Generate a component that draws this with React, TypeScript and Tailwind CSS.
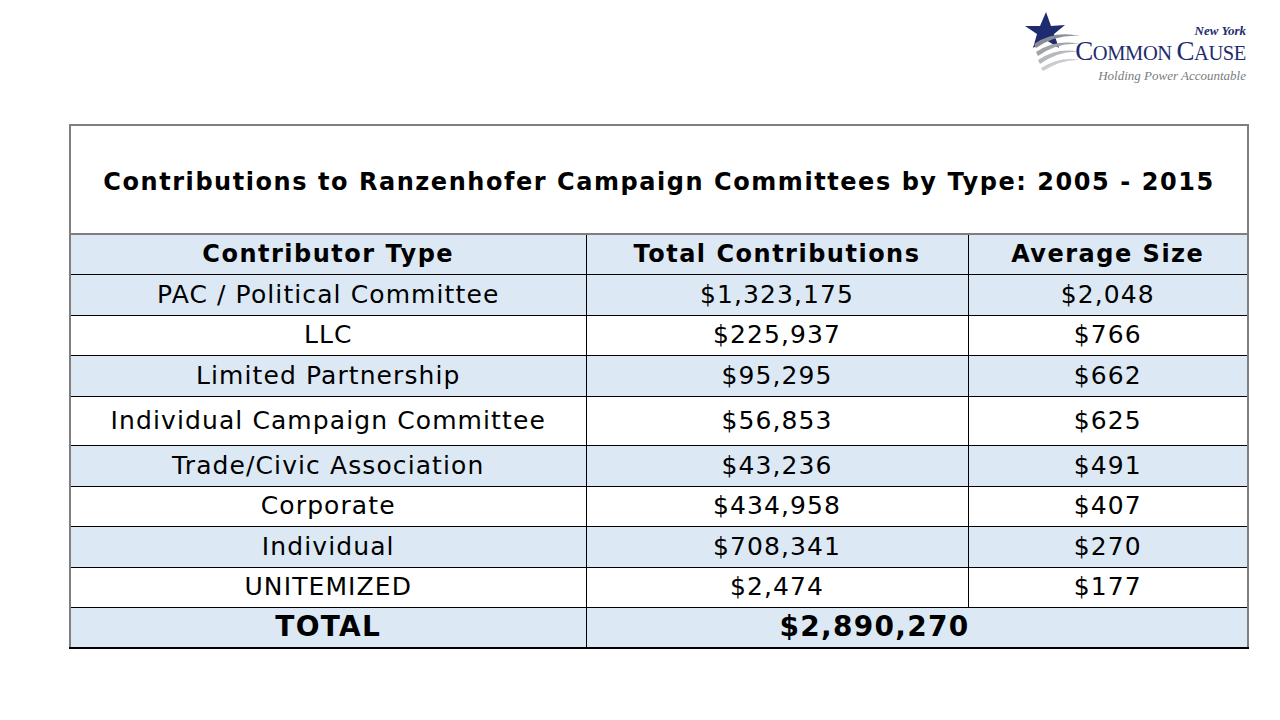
import React from "react"

type Row = { type: string; total: string; avg: string; h: string; shaded: boolean }

const rows: Row[] = [
    { type: "PAC / Political Committee", total: "$1,323,175", avg: "$2,048", h: "h-[41px]", shaded: true },
    { type: "LLC", total: "$225,937", avg: "$766", h: "h-[40px]", shaded: false },
    { type: "Limited Partnership", total: "$95,295", avg: "$662", h: "h-[41px]", shaded: true },
    { type: "Individual Campaign Committee", total: "$56,853", avg: "$625", h: "h-[49px]", shaded: false },
    { type: "Trade/Civic Association", total: "$43,236", avg: "$491", h: "h-[41px]", shaded: true },
    { type: "Corporate", total: "$434,958", avg: "$407", h: "h-[40px]", shaded: false },
    { type: "Individual", total: "$708,341", avg: "$270", h: "h-[41px]", shaded: true },
    { type: "UNITEMIZED", total: "$2,474", avg: "$177", h: "h-[40px]", shaded: false },
]

const Logo = () => (
    <div className="flex items-start">
        <svg width="56" height="62" viewBox="0 0 56 62" className="mt-[9px]">
            {/* star */}
            <path d="M22 0 L27 14 L41 13 L30 22 L35 36 L22 28 L9 36 L13 22 L1 14 L16 14 Z" fill="#1e2b6e" />
            {/* swooshes */}
            <path d="M10 32 Q30 18 56 24 Q32 22 12 36 Z" fill="#8a8d94" />
            <path d="M12 40 Q32 27 56 32 Q34 30 14 44 Z" fill="#a0a3a8" />
            <path d="M14 48 Q34 35 56 40 Q36 38 16 52 Z" fill="#b6b8bc" />
            <path d="M17 56 Q36 44 56 48 Q38 47 19 59 Z" fill="#c9cbce" />
        </svg>
        <div className="flex flex-col items-end ml-[-5px]" style={{ fontFamily: '"Liberation Serif", serif' }}>
            <span className="italic font-bold text-[13px] leading-[14px] text-[#1e2b6e] mt-[21px]">New York</span>
            <span className="text-[#1e2b6e] leading-[26px] tracking-[-0.4px]">
                <span className="text-[27px]">C</span><span className="text-[20.5px]">OMMON </span>
                <span className="text-[27px]">C</span><span className="text-[20.5px]">AUSE</span>
            </span>
            <span className="italic text-[13px] leading-[15px] text-[#7a7c80]">Holding Power Accountable</span>
        </div>
    </div>
)

const App: React.FC = () => {
    return (
        <div className="w-[1280px] h-[720px] bg-white relative overflow-hidden" style={{ fontFamily: '"DejaVu Sans", Verdana, sans-serif' }}>
            <div className="flex justify-end pr-[34px] pt-[3px] h-[124px]">
                <div className="h-[82px]">
                    <Logo />
                </div>
            </div>
            <div className="pl-[69px]">
                <table className="border-collapse text-black table-fixed w-[1178px]">
                    <colgroup>
                        <col className="w-[516px]" />
                        <col className="w-[382px]" />
                        <col className="w-[280px]" />
                    </colgroup>
                    <tbody>
                        <tr className="h-[109px]">
                            <td colSpan={3} className="border-2 border-[#7f7f7f] text-center font-bold text-[24px] tracking-[1.55px] pt-[4px] whitespace-nowrap">
                                Contributions to Ranzenhofer Campaign Committees by Type: 2005 - 2015
                            </td>
                        </tr>
                        <tr className="h-[40px] bg-[#dce9f5] font-bold text-[24px] leading-[30px] tracking-[1.5px]">
                            <td className="border border-black border-l-2 border-l-[#7f7f7f] border-t-2 border-t-[#7f7f7f] text-center">Contributor Type</td>
                            <td className="border border-black border-t-2 border-t-[#7f7f7f] text-center">Total Contributions</td>
                            <td className="border border-black border-r-2 border-r-[#7f7f7f] border-t-2 border-t-[#7f7f7f] text-center">Average Size</td>
                        </tr>
                        {rows.map((r) => (
                            <tr key={r.type} className={`${r.h} text-[25px] leading-[30px] tracking-[1.1px] ${r.shaded ? "bg-[#dce9f5]" : "bg-white"}`}>
                                <td className="border border-black border-l-2 border-l-[#7f7f7f] text-center whitespace-nowrap">{r.type}</td>
                                <td className="border border-black text-center">{r.total}</td>
                                <td className="border border-black border-r-2 border-r-[#7f7f7f] text-center">{r.avg}</td>
                            </tr>
                        ))}
                        <tr className="h-[41px] bg-[#dce9f5] font-bold text-[28px] leading-[32px] tracking-[1.3px]">
                            <td className="border border-black border-l-2 border-l-[#7f7f7f] border-b-2 border-b-black text-center">TOTAL</td>
                            <td colSpan={2} className="border border-black border-r-2 border-r-[#7f7f7f] border-b-2 border-b-black pl-[193px]">$2,890,270</td>
                        </tr>
                    </tbody>
                </table>
            </div>
        </div>
    )
}

export default App
